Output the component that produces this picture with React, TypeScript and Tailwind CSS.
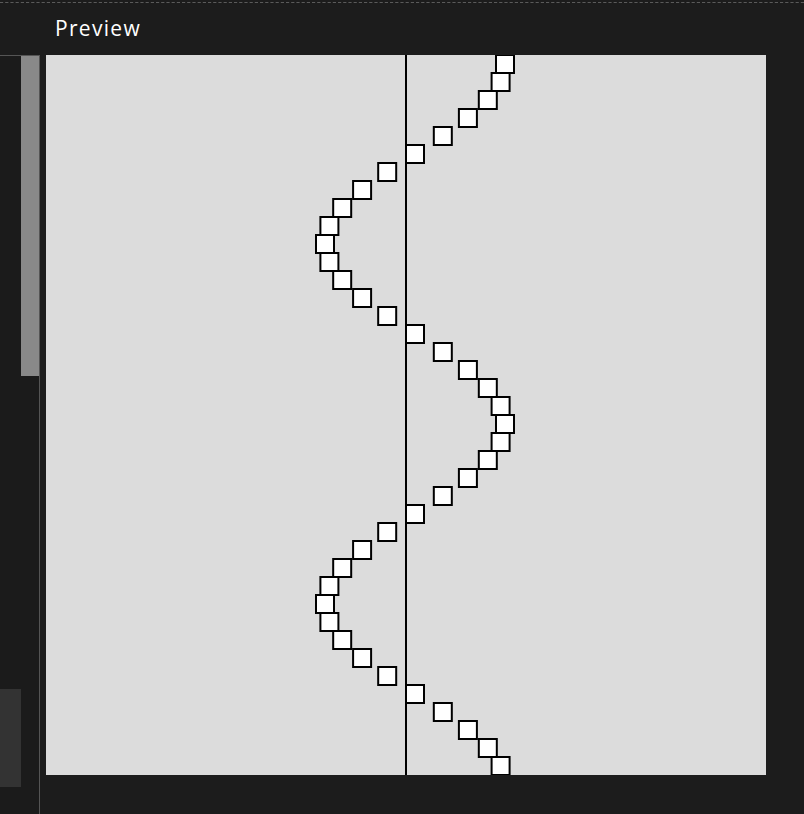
import React from "react";

export default function App() {
  const squares = Array.from({ length: 40 }, (_, i) => ({
    x: 360 + 90 * Math.cos((i * Math.PI) / 10),
    y: i * 18,
  }));
  return (
    <div className="relative w-[804px] h-[814px] bg-[#1c1c1c] overflow-hidden flex flex-col">
      <svg className="absolute left-0 top-[1px]" width="804" height="3">
        <line x1="0" y1="1.5" x2="804" y2="1.5" stroke="#5a5a5a" strokeWidth="1" strokeDasharray="3.2 2" />
      </svg>
      <div className="h-[55px] flex items-center pl-[55px] shrink-0">
        <span
          className="text-white text-[21px] font-medium leading-none pt-[1px] tracking-[1.3px]"
          style={{ fontFamily: '"Open Sans", "Liberation Sans", sans-serif' }}
        >
          Preview
        </span>
      </div>
      <div className="flex flex-1 gap-[6px]">
        <div className="w-[40px] h-[759px] border-t border-r border-[#555] bg-[#1b1b1b] flex flex-col shrink-0">
          <div className="ml-[21px] w-[18px] h-[320px] bg-[#898989]" />
          <div className="mt-auto mb-[27px] w-[21px] h-[98px] bg-[#333333]" />
        </div>
        <div className="w-[720px] h-[720px] bg-[#dcdcdc] shrink-0 overflow-hidden">
          <svg width="720" height="720" viewBox="0 0 720 720">
            <line x1="360" y1="0" x2="360" y2="720" stroke="#000" strokeWidth="2" />
            {squares.map((s, i) => (
              <rect key={i} x={s.x} y={s.y} width="18" height="18" fill="#fff" stroke="#000" strokeWidth="2" />
            ))}
          </svg>
        </div>
      </div>
    </div>
  );
}
